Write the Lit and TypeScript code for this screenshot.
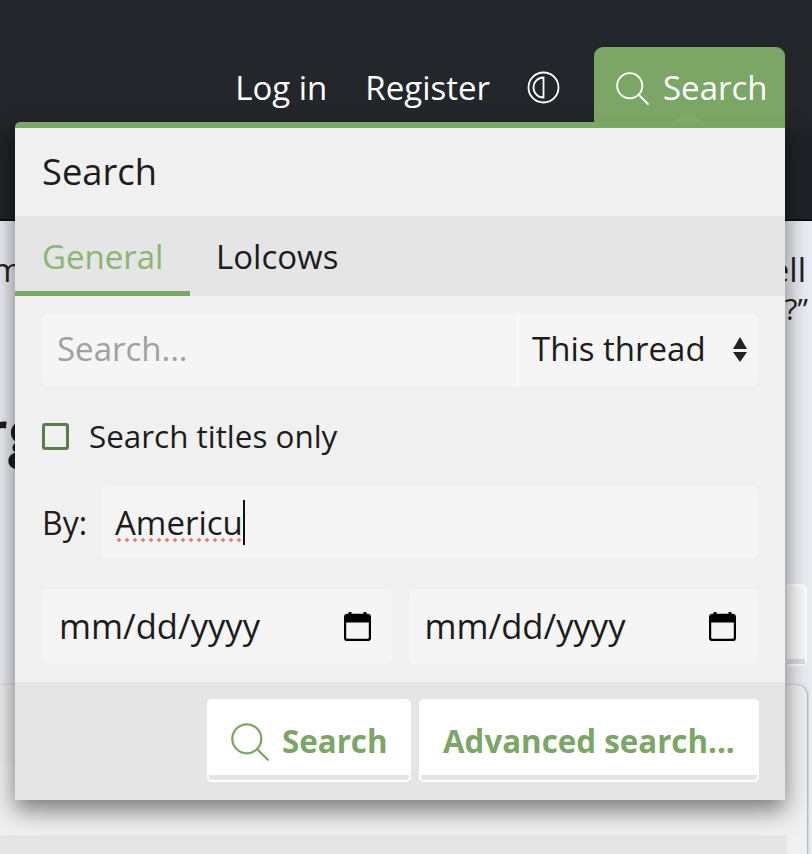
import { LitElement, html, css } from "lit";
import { customElement } from "lit/decorators.js";

const searchIcon = (cls: string) => html`<svg class=${cls} viewBox="0 0 38 38" fill="none" stroke="currentColor" stroke-width="2.2" stroke-linecap="round"><circle cx="15.8" cy="15.8" r="14.5"/><line x1="26.3" y1="26.3" x2="36.8" y2="36.8"/></svg>`;
const calIcon = html`<svg class="cal" viewBox="0 0 27 30"><path d="M6 1v5M21 1v5" stroke="#000" stroke-width="3" fill="none"/><rect x="1" y="4" width="25" height="25" rx="2.5" fill="none" stroke="#000" stroke-width="2.4"/><rect x="1" y="4" width="25" height="7.5" fill="#000"/></svg>`;

@customElement("app-root")
export class AppRoot extends LitElement {
  static styles = css`
    :host { display: block; position: relative; width: 812px; height: 854px; overflow: hidden; font-family: "Open Sans", sans-serif; font-size: 33px; color: #1c1c1c; background: #ebecf2; }
    .top { height: 129px; background: #23262b; display: flex; justify-content: flex-end; align-items: flex-start; padding-right: 27px; box-sizing: border-box; }
    .nav-link { color: #fff; margin-top: 47px; height: 82px; display: flex; align-items: center; line-height: 1; box-sizing: border-box; padding-bottom: 2px; }
    .login { margin-right: 38px; }
    .register { margin-right: 37px; }
    .theme { width: 33px; height: 33px; margin-right: 34px; margin-top: 71px; }
    .tab { width: 191px; height: 75px; margin-top: 47px; background: linear-gradient(#7ba665 92%, #76a061); border-radius: 9px 9px 0 0; color: #fff; display: flex; align-items: flex-start; padding: 23px 0 0 22px; box-sizing: border-box; gap: 14px; line-height: 38px; position: relative; z-index: 1; }
    .tab span { margin-top: -1px; }
    .tab-icon { width: 33px; height: 33px; flex: none; margin-top: 2px; }
    .notch { position: absolute; left: 78px; bottom: 0; width: 0; height: 0; border-left: 16px solid transparent; border-right: 16px solid transparent; border-bottom: 12px solid #7fa96a; }
    .sub { height: 92px; background: #1f2226; border-bottom: 2px solid #0d0e10; box-sizing: border-box; }
    .main { height: 633px; display: flex; flex-direction: column; }
    .row1 { display: flex; justify-content: space-between; padding: 29px 6px 0 0; line-height: 40px; color: #222; }
    .clip-left { margin-left: -8px; }
    .row2 { text-align: right; padding-right: 4px; line-height: 40px; color: #222; font-size: 30px; margin-top: -1px; }
    .big { font-size: 62px; line-height: 60px; margin-top: 72px; margin-left: -19px; font-weight: 600; color: #1c1c1c; }
    .ghost { align-self: flex-end; width: 20px; height: 82px; margin: 123px 5px 0 0; background: #f8f8f8; border-radius: 0 6px 6px 0; border: 2px solid #fff; border-left: 0; box-sizing: border-box; position: relative; }
    .ghost::after { content: ""; position: absolute; left: 0; right: 0; bottom: 0; height: 5px; background: #dcdcdc; }
    .card { margin-top: 19px; flex: 1; width: 807px; background: #f0f0f0; border-radius: 0 10px 0 0; box-shadow: 1px 0 2px rgba(0,0,0,.3); display: flex; flex-direction: column; }
    .band1 { height: 80px; background: #ececec; width: 787px; }
    .band2 { height: 70px; background: #f0f0f0; width: 787px; }
    .band3 { flex: 1; background: #e5e5e5; width: 787px; }
    .menu { position: absolute; left: 15px; top: 122px; width: 770px; height: 678px; display: flex; flex-direction: column; background: #f0f0f0; border-top: 6px solid #7ba665; box-sizing: border-box; box-shadow: 0 10px 24px rgba(0,0,0,.5); border-radius: 5px 0 0 0; }
    .menu-title { height: 88px; display: flex; align-items: center; padding: 0 0 2px 27px; font-size: 36.3px; box-sizing: border-box; flex: none; }
    .tabs { height: 80px; background: #e5e5e5; display: flex; flex: none; }
    .t { height: 80px; box-sizing: border-box; padding: 20px 26px 0; line-height: 42px; }
    .t.active { width: 175px; padding-left: 27px; color: #8ab574; border-bottom: 5px solid #7ba665; }
    .body { flex: 1; padding: 17px 28px 0; display: flex; flex-direction: column; box-sizing: border-box; }
    .control { background: #f5f5f5; border-radius: 6px; height: 73px; display: flex; align-items: center; box-sizing: border-box; line-height: 1; }
    .search-row { display: flex; }
    .query { width: 476px; padding: 0 0 2px 14px; color: #a0a0a0; border-right: 2px solid #fbfbfb; border-radius: 6px 0 0 6px; }
    .scope { flex: 1; border-radius: 0 6px 6px 0; padding: 0 0 2px 13px; position: relative; }
    .arrows { position: absolute; right: 10px; top: 24px; width: 14px; height: 25px; }
    .check { display: flex; align-items: center; margin: 37px 0 0 -1px; height: 27px; gap: 20px; font-size: 31.4px; }
    .check-label { margin-top: -2px; }
    .box { width: 27px; height: 27px; border: 3px solid #5b7d4a; border-radius: 3px; box-sizing: border-box; flex: none; }
    .by { display: flex; align-items: center; margin-top: 36px; }
    .by-label { width: 58px; flex: none; font-size: 32px; margin-left: -1px; margin-right: 1px; }
    .by-input { flex: 1; padding-left: 14px; }
    .misspelt { position: relative; }
    .misspelt::after { content: ""; position: absolute; left: 0; right: 0; bottom: -3px; height: 4px; background: radial-gradient(circle at center, #f97868 1.5px, transparent 2px) 0 0 / 8px 4px repeat-x; }
    .caret { display: inline-block; width: 2px; height: 45px; background: #111; flex: none; }
    .dates { display: flex; gap: 17px; margin-top: 30px; }
    .date { flex: 1; height: 75px; padding: 0 21px 0 16px; justify-content: space-between; font-size: 34.6px; }
    .cal { width: 27px; height: 30px; flex: none; margin-top: -2px; }
    .footer { height: 118px; background: #e5e5e5; display: flex; justify-content: flex-end; gap: 8px; padding: 17px 26px 0 0; box-sizing: border-box; flex: none; }
    .btn { height: 83px; background: #fff; border: 2px solid #fff; border-radius: 5px; box-sizing: border-box; display: flex; align-items: flex-start; padding-top: 20px; color: #7ba665; font-weight: 700; font-size: 31.3px; line-height: 40px; position: relative; }
    .btn::after { content: ""; position: absolute; left: 0; right: 0; bottom: 0; height: 5px; background: #e5e5e5; border-radius: 0 0 3px 3px; }
    .btn-search { width: 204px; padding-left: 22px; gap: 13px; }
    .btn-adv { width: 340px; padding-left: 22px; }
    .btn-icon { width: 38px; height: 38px; flex: none; margin-top: 2px; }
  `;

  render() {
    return html`
      <div class="top">
        <div class="nav-link login">Log in</div>
        <div class="nav-link register">Register</div>
        <svg class="theme" viewBox="0 0 33 33" fill="none" stroke="#fff" stroke-width="1.8"><circle cx="16.5" cy="16.5" r="15"/><path d="M16.5 6.5A10 10 0 0 0 16.5 26.5Z"/></svg>
        <div class="tab">${searchIcon("tab-icon")}<span>Search</span><i class="notch"></i></div>
      </div>
      <div class="sub"></div>
      <div class="main">
        <div class="row1"><span class="clip-left">m</span><span>ell</span></div>
        <div class="row2">?”</div>
        <div class="big">rg</div>
        <div class="ghost"></div>
        <div class="card"><div class="band1"></div><div class="band2"></div><div class="band3"></div></div>
      </div>
      <div class="menu">
        <div class="menu-title">Search</div>
        <div class="tabs"><div class="t active">General</div><div class="t">Lolcows</div></div>
        <div class="body">
          <div class="search-row">
            <div class="control query">Search...</div>
            <div class="control scope">This thread
              <svg class="arrows" viewBox="0 0 14 25"><path d="M7 0l7 12H0zM0 15h14l-7 10z" fill="#222"/></svg>
            </div>
          </div>
          <label class="check"><span class="box"></span><span class="check-label">Search titles only</span></label>
          <div class="by"><span class="by-label">By:</span>
            <div class="control by-input"><span class="misspelt">Americu</span><span class="caret"></span></div>
          </div>
          <div class="dates">
            <div class="control date"><span>mm/dd/yyyy</span>${calIcon}</div>
            <div class="control date"><span>mm/dd/yyyy</span>${calIcon}</div>
          </div>
        </div>
        <div class="footer">
          <div class="btn btn-search">${searchIcon("btn-icon")}<span>Search</span></div>
          <div class="btn btn-adv">Advanced search...</div>
        </div>
      </div>
    `;
  }
}
